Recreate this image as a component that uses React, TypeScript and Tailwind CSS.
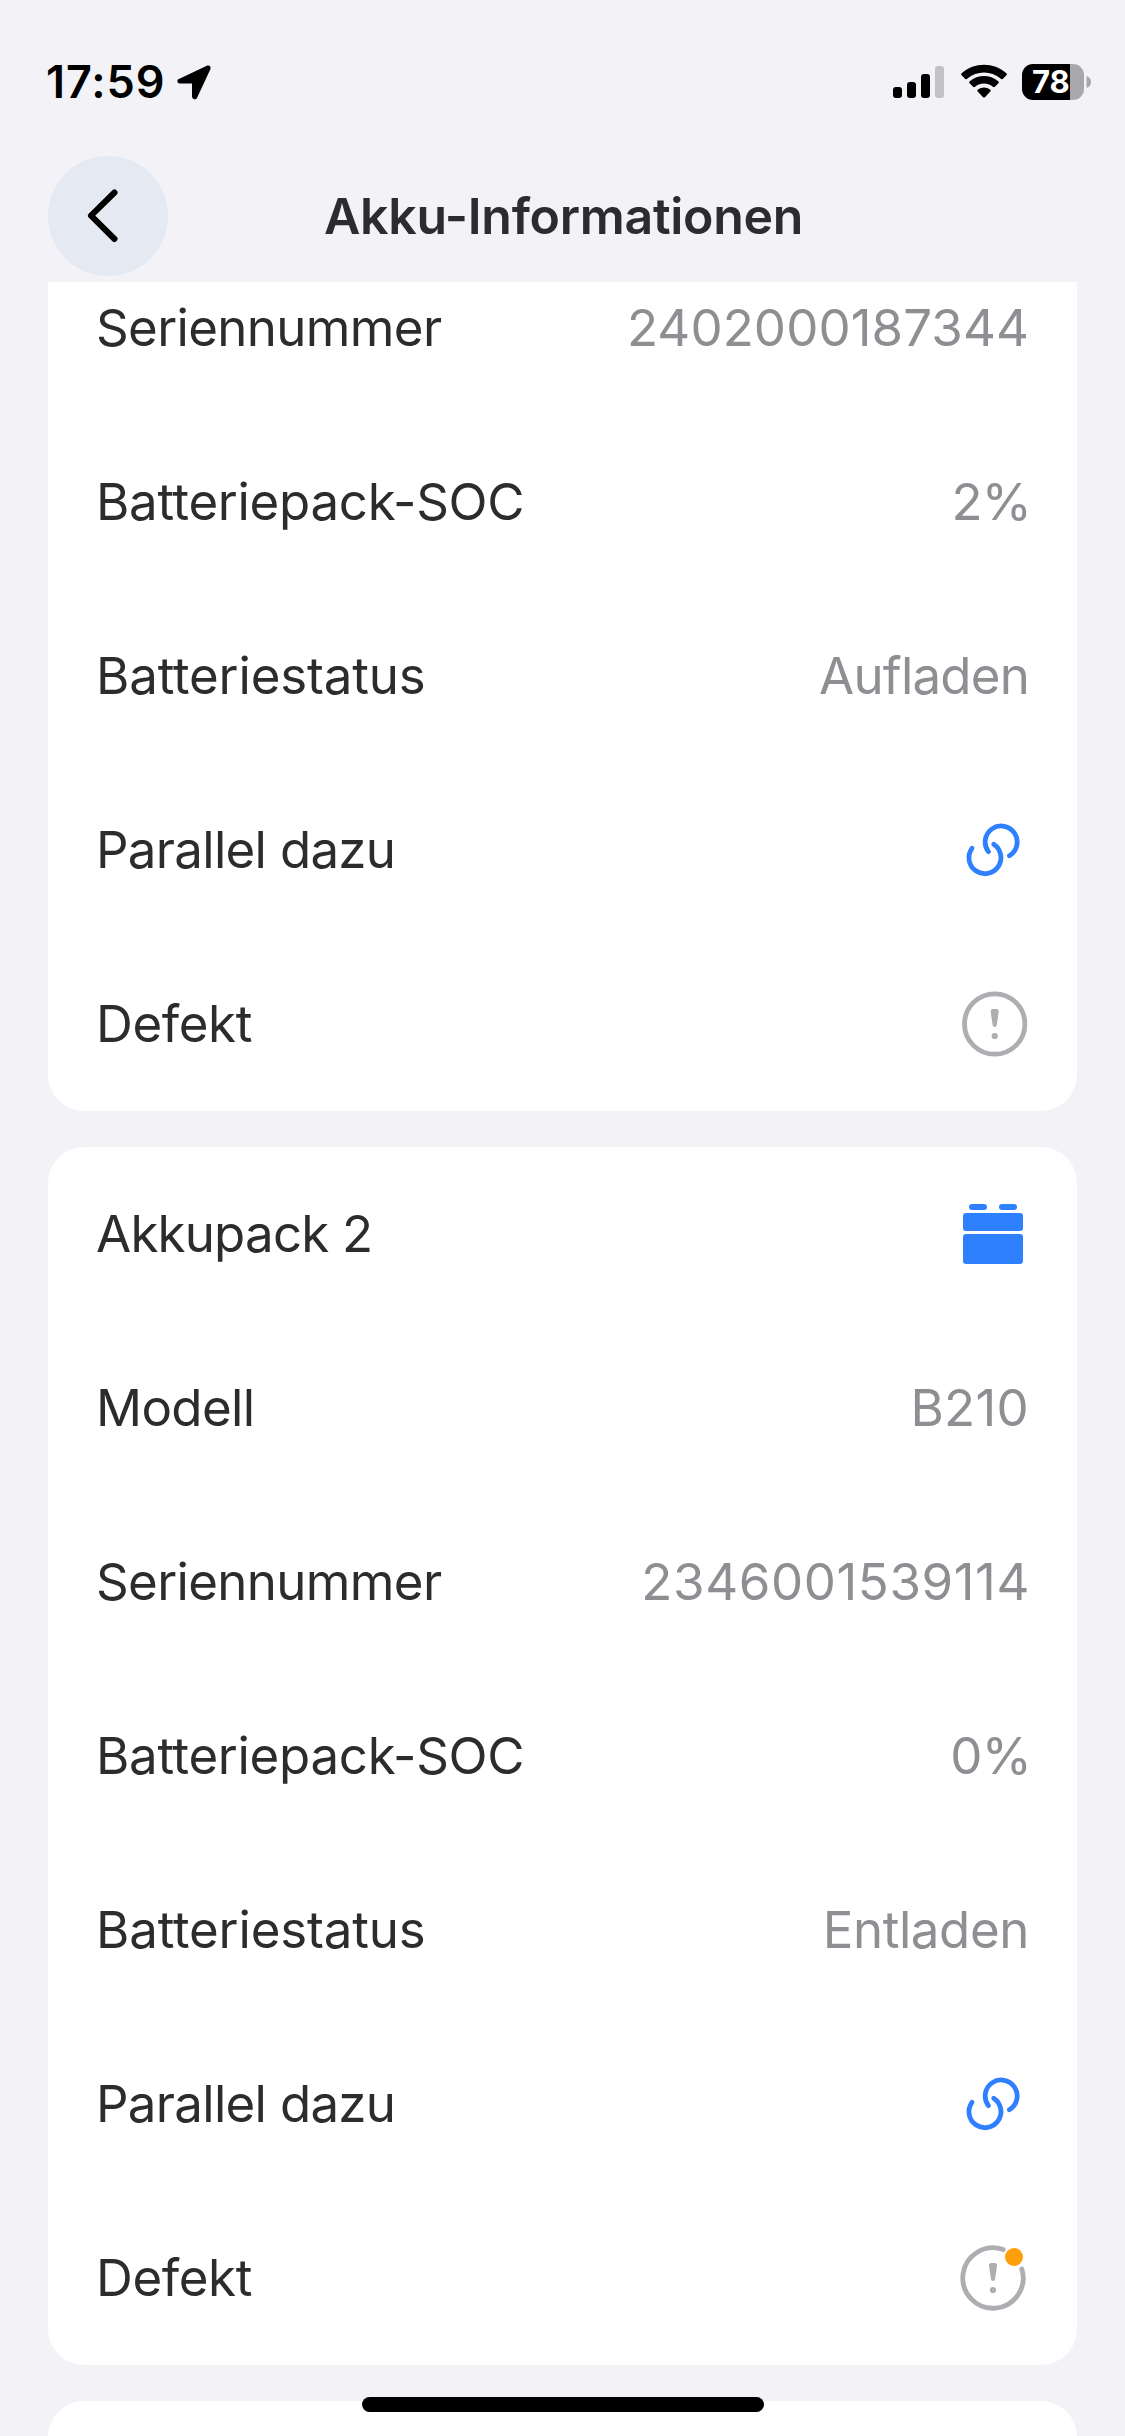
import type { ReactNode } from 'react';

type Row = {
    label: string;
    labelClass?: string;
    value?: string;
    valueClass?: string;
    icon?: ReactNode;
};

function LinkIcon() {
    return (
        <svg viewBox="0 0 72 72" className="w-[72px] h-[72px]" fill="none" stroke="#2f80ff" strokeWidth="4.8" strokeLinecap="round">
            <path d="M31.4 37.6A16 16 0 1 1 52.4 41.7" />
            <path d="M15 34.3A16 16 0 1 0 36.7 30.3" />
        </svg>
    );
}

function PackIcon() {
    return (
        <svg viewBox="0 0 72 72" className="w-[72px] h-[72px]" fill="#2f80ff">
            <rect x="12" y="6" width="18" height="6" rx="3" />
            <rect x="42" y="6" width="18" height="6" rx="3" />
            <rect x="6" y="15" width="60" height="18" rx="3" />
            <rect x="6" y="36" width="60" height="30" rx="3" />
        </svg>
    );
}

function FaultIcon({ alert = false }: { alert?: boolean }) {
    const cx = alert ? 36 : 37.7;
    return (
        <svg viewBox="0 0 72 72" className="w-[72px] h-[72px]">
            {alert ? (
                <path d="M46.2 7.6A30.2 30.2 0 1 0 64.8 27" fill="none" stroke="#aeaeb2" strokeWidth="4.8" strokeLinecap="round" />
            ) : (
                <circle cx={cx} cy="36" r="30.2" fill="none" stroke="#aeaeb2" strokeWidth="4.8" />
            )}
            <g transform={`translate(${cx} 36)`} fill="#aeaeb2">
                <path d="M-1.6 -15H1.6Q4.3 -15 4 -12.2L2.1 1Q1.8 3 0 3T-2.1 1L-4 -12.2Q-4.3 -15 -1.6 -15Z" />
                <circle cy="12" r="3.1" />
            </g>
            {alert && <circle cx="57" cy="15" r="9" fill="#ff9f0a" />}
        </svg>
    );
}

const serial = { label: 'Seriennummer', labelClass: 'tracking-[-0.65px]' };
const soc = { label: 'Batteriepack-SOC', labelClass: 'tracking-[-0.3px]', valueClass: 'tracking-[-0.8px] -mr-[2px]' };
const status = { label: 'Batteriestatus', labelClass: 'tracking-[-0.15px]' };
const parallel: Row = { label: 'Parallel dazu', labelClass: 'tracking-[-0.7px]', icon: <LinkIcon /> };
const fault = { label: 'Defekt', labelClass: 'tracking-[-0.4px]' };

const packOne: Row[] = [
    { ...serial, value: '2402000187344', valueClass: 'tracking-[0.1px]' },
    { ...soc, value: '2%' },
    { ...status, value: 'Aufladen', valueClass: 'tracking-[-0.8px]' },
    parallel,
    { ...fault, icon: <FaultIcon /> },
];

const packTwo: Row[] = [
    { label: 'Akkupack 2', labelClass: 'tracking-[-0.8px]', icon: <PackIcon /> },
    { label: 'Modell', labelClass: 'tracking-[-0.65px]', value: 'B210', valueClass: 'tracking-[0.3px]' },
    { ...serial, value: '2346001539114', valueClass: 'tracking-[0.6px] -mr-px' },
    { ...soc, value: '0%' },
    { ...status, value: 'Entladen', valueClass: 'tracking-[-0.4px]' },
    parallel,
    { ...fault, icon: <FaultIcon alert /> },
];

function Card({ rows }: { rows: Row[] }) {
    return (
        <section className="shrink-0 rounded-[36px] bg-white px-12">
            {rows.map((row) => (
                <div key={row.label} className="flex h-[174px] items-center justify-between text-[51px]">
                    <span className={`text-[#2c2c2e] ${row.labelClass ?? ''}`}>{row.label}</span>
                    {row.icon ?? <span className={`text-[#8e8e93] ${row.valueClass ?? ''}`}>{row.value}</span>}
                </div>
            ))}
        </section>
    );
}

function StatusBar() {
    return (
        <div className="flex h-[156px] items-start justify-between pl-[46px] pr-[34px] pt-16">
            <div className="flex h-9 items-center">
                <span className="w-[130px] text-[45px] font-semibold leading-9 tracking-[0.9px] text-black">17:59</span>
                <svg viewBox="0 0 36 36" className="h-9 w-9">
                    <path d="M31.5 3L3 16.5Q2.5 18 4 18H17.5V32.5Q18 34.5 19.5 33.5L33 4.5Q33.5 2.5 31.5 3Z" fill="#000" stroke="#000" strokeWidth="3" strokeLinejoin="round" />
                </svg>
            </div>
            <div className="flex h-9 items-center">
                <svg viewBox="0 0 52 36" className="mr-4 h-9 w-[52px]">
                    <rect x="0" y="23" width="9" height="11" rx="3" />
                    <rect x="14" y="18" width="9" height="16" rx="3" />
                    <rect x="28" y="10" width="9" height="24" rx="3" />
                    <rect x="42" y="2" width="9" height="32" rx="3" fill="#c2c1c6" />
                </svg>
                <svg viewBox="0 0 46 36" className="mr-[15px] h-9 w-[46px]">
                    <path d="M.6 11.3Q-.4 10.3 .7 9.2C13.5-2 32.5-2 45.3 9.2Q46.4 10.3 45.4 11.3L42 14.8Q41 15.7 39.9 14.7C30 6.3 16 6.3 6.1 14.7Q5 15.7 4 14.8Z" />
                    <path d="M8.6 19.3Q7.6 18.3 8.7 17.3C17 10.3 29 10.3 37.3 17.3Q38.4 18.3 37.4 19.3L33.9 22.7Q33 23.6 31.9 22.7C26.5 18.4 19.5 18.4 14.1 22.7Q13 23.6 12.1 22.7Z" />
                    <path d="M16.7 27.4Q15.7 26.3 16.9 25.5C20.5 22.8 25.5 22.8 29.1 25.5Q30.3 26.3 29.3 27.4L23.9 33.2Q23 34 22.1 33.2Z" />
                </svg>
                <div className="mr-[2px] flex h-9 w-[62px] items-center rounded-[11px] bg-[linear-gradient(to_right,#000_48px,#a8a7ac_48px)] pl-[10px]">
                    <span className="text-[31px] font-bold leading-[40px] text-white">78</span>
                </div>
                <svg viewBox="0 0 5 12" className="h-3 w-[5px]">
                    <path d="M0.500 0Q5 1.500 5 6T0.500 12Z" fill="#a8a7ac" />
                </svg>
            </div>
        </div>
    );
}

export default function App() {
    return (
        <div className="relative flex h-[2436px] w-[1125px] flex-col overflow-hidden bg-[#f2f2f7] font-['Inter',sans-serif]">
            <StatusBar />
            <header className="grid h-[126px] shrink-0 grid-cols-[120px_1fr_120px] items-start px-12">
                <button aria-label="Zurück" className="flex h-[120px] w-[120px] items-center justify-center rounded-full bg-[#e5e9f2]">
                    <svg viewBox="0 0 60 60" className="h-[60px] w-[60px]" fill="none" stroke="#000" strokeWidth="6" strokeLinecap="round" strokeLinejoin="round">
                        <path d="M36.5 6.5L13 29.7L36.5 53" />
                    </svg>
                </button>
                <h1 className="pl-[2px] text-center text-[50px] font-semibold leading-[120px] tracking-[-0.3px] text-[#2c2c2e]">Akku-Informationen</h1>
            </header>

            {/* list is scrolled, so the first card runs under the header */}
            <main className="flex-1 overflow-hidden px-12">
                <div className="-mt-[41px] flex flex-col gap-9">
                    <Card rows={packOne} />
                    <Card rows={packTwo} />
                    <section className="h-[174px] shrink-0 rounded-[36px] bg-white" />
                </div>
            </main>

            <div className="absolute left-[362px] top-[2397px] h-[15px] w-[402px] rounded-full bg-black" />
        </div>
    );
}
